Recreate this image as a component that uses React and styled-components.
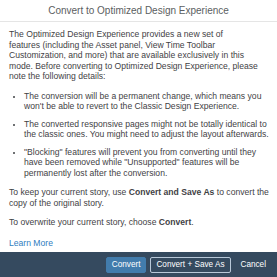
import styled, { createGlobalStyle } from 'styled-components';

const GlobalStyle = createGlobalStyle`
  html, body {
    margin: 0;
    padding: 0;
    background: #ffffff;
  }
  body {
    font-family: "Liberation Sans", Arial, sans-serif;
  }
`;

const Dialog = styled.div`
  width: 277px;
  height: 277px;
  display: flex;
  flex-direction: column;
  background: #ffffff;
  color: #32363a;
  overflow: hidden;
`;

const Header = styled.div`
  height: 21px;
  flex-shrink: 0;
  display: flex;
  align-items: center;
  justify-content: center;
  border-bottom: 1px solid #e5e5e5;
  font-size: 10px;
  color: #5b5e61;
`;

const Body = styled.div`
  flex: 1;
  padding: 7px 4px 0 9px;
  font-size: 8.6px;
  line-height: 10.5px;
  color: #3f4245;
`;

const Para = styled.p`
  margin: 0 0 9px 0;
`;

const List = styled.ul`
  margin: 0 0 9px 0;
  padding: 0 0 0 15px;
`;

const Item = styled.li`
  margin-bottom: ${(p) => (p.$last ? 0 : 7)}px;
  &::marker {
    font-size: 7px;
  }
`;

const Link = styled.a`
  display: inline-block;
  margin-top: 1px;
  color: #2f7dc0;
  text-decoration: none;
  font-size: 8.6px;
`;

const Footer = styled.div`
  height: 25px;
  flex-shrink: 0;
  display: flex;
  align-items: center;
  justify-content: flex-end;
  gap: 4px;
  padding-right: 5px;
  background: #354a5f;
`;

const Button = styled.button`
  height: 16px;
  padding: 0 5px;
  font-family: "Liberation Sans", Arial, sans-serif;
  font-size: 8.2px;
  color: #ffffff;
  border-radius: 2px;
  cursor: pointer;
  background: ${(p) => (p.$variant === 'primary' ? '#427cac' : 'transparent')};
  border: 1px solid
    ${(p) =>
      p.$variant === 'primary' ? '#427cac' : p.$variant === 'outline' ? '#b8c8d8' : 'transparent'};
`;

export default function App() {
  return (
    <>
      <GlobalStyle />
      <Dialog>
        <Header>Convert to Optimized Design Experience</Header>
        <Body>
          <Para>
            The Optimized Design Experience provides a new set of
            <br />
            features (including the Asset panel, View Time Toolbar
            <br />
            Customization, and more) that are available exclusively in this
            <br />
            mode. Before converting to Optimized Design Experience, please
            <br />
            note the following details:
          </Para>
          <List>
            <Item>
              The conversion will be a permanent change, which means you won't be able to revert
              to the Classic Design Experience.
            </Item>
            <Item>
              The converted responsive pages might not be totally identical to the classic ones.
              You might need to adjust the layout afterwards.
            </Item>
            <Item $last>
              "Blocking" features will prevent you from converting until they have been removed
              while "Unsupported" features will be permanently lost after the conversion.
            </Item>
          </List>
          <Para>
            To keep your current story, use <b>Convert and Save As</b> to convert the copy of the
            original story.
          </Para>
          <Para>
            To overwrite your current story, choose <b>Convert</b>.
          </Para>
          <Link href="#">Learn More</Link>
        </Body>
        <Footer>
          <Button $variant="primary">Convert</Button>
          <Button $variant="outline">Convert + Save As</Button>
          <Button $variant="plain">Cancel</Button>
        </Footer>
      </Dialog>
    </>
  );
}
